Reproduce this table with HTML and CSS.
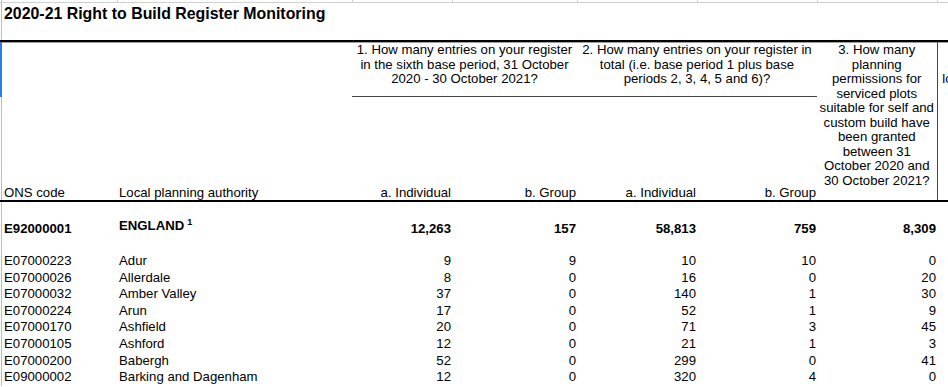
FILE: index.html
```html
<!DOCTYPE html>
<html lang="en">
<head>
<meta charset="utf-8">
<title>2020-21 Right to Build Register Monitoring</title>
<link rel="stylesheet" href="styles.css">
</head>
<body>
<table class="sheet">
  <colgroup>
    <col class="c-code"><col class="c-name"><col class="c-a"><col class="c-b"><col class="c-a2"><col class="c-b2"><col class="c-q3"><col class="c-q4">
  </colgroup>
  <tbody>
    <tr class="grid">
      <td class="first"></td><td></td><td></td><td></td><td></td><td></td><td></td><td></td>
    </tr>
    <tr class="title">
      <td class="first" colspan="8">2020-21 Right to Build Register Monitoring</td>
    </tr>
    <tr class="q">
      <td class="first sel" colspan="2"></td>
      <td class="qsub" colspan="2">1. How many entries on your register in the sixth base period, 31 October 2020 - 30 October 2021?</td>
      <td class="qsub" colspan="2">2. How many entries on your register in total (i.e. base period 1 plus base periods 2, 3, 4, 5 and 6)?</td>
      <td class="q3" rowspan="2">3. How many planning permissions for serviced plots suitable for self and custom build have been granted between 31 October 2020 and 30 October 2021?</td>
      <td class="q4" rowspan="2">4. How many<br>were granted on<br>local authority land<br>in the sixth base<br>period?</td>
    </tr>
    <tr class="lab">
      <td class="first">ONS code</td>
      <td>Local planning authority</td>
      <td class="num">a. Individual</td>
      <td class="num">b. Group</td>
      <td class="num">a. Individual</td>
      <td class="num">b. Group</td>
    </tr>
    <tr class="gap"><td class="first" colspan="8"></td></tr>
    <tr class="eng">
      <td class="first">E92000001</td>
      <td class="name">ENGLAND<sup class="note">1</sup></td>
      <td class="num">12,263</td>
      <td class="num">157</td>
      <td class="num">58,813</td>
      <td class="num">759</td>
      <td class="num">8,309</td>
      <td></td>
    </tr>
    <tr class="gap"><td class="first" colspan="8"></td></tr>
    <tr class="row"><td class="first">E07000223</td><td>Adur</td><td class="num">9</td><td class="num">9</td><td class="num">10</td><td class="num">10</td><td class="num">0</td><td></td></tr>
    <tr class="row"><td class="first">E07000026</td><td>Allerdale</td><td class="num">8</td><td class="num">0</td><td class="num">16</td><td class="num">0</td><td class="num">20</td><td></td></tr>
    <tr class="row"><td class="first">E07000032</td><td>Amber Valley</td><td class="num">37</td><td class="num">0</td><td class="num">140</td><td class="num">1</td><td class="num">30</td><td></td></tr>
    <tr class="row"><td class="first">E07000224</td><td>Arun</td><td class="num">17</td><td class="num">0</td><td class="num">52</td><td class="num">1</td><td class="num">9</td><td></td></tr>
    <tr class="row"><td class="first">E07000170</td><td>Ashfield</td><td class="num">20</td><td class="num">0</td><td class="num">71</td><td class="num">3</td><td class="num">45</td><td></td></tr>
    <tr class="row"><td class="first">E07000105</td><td>Ashford</td><td class="num">12</td><td class="num">0</td><td class="num">21</td><td class="num">1</td><td class="num">3</td><td></td></tr>
    <tr class="row"><td class="first">E07000200</td><td>Babergh</td><td class="num">52</td><td class="num">0</td><td class="num">299</td><td class="num">0</td><td class="num">41</td><td></td></tr>
    <tr class="row"><td class="first">E09000002</td><td>Barking and Dagenham</td><td class="num">12</td><td class="num">0</td><td class="num">320</td><td class="num">4</td><td class="num">0</td><td></td></tr>
  </tbody>
</table>
</body>
</html>
```
FILE: styles.css
```css
html, body {
  margin: 0;
  padding: 0;
  overflow: hidden;
  background: #fff;
}

body {
  font-family: "Liberation Sans", Arial, sans-serif;
  font-size: 13.2px;
  color: #000;
}

.sheet {
  border-collapse: collapse;
  table-layout: fixed;
  width: 1057px;
}

.c-code { width: 117px; }
.c-name { width: 235px; }
.c-a { width: 100px; }
.c-b { width: 125px; }
.c-a2 { width: 120px; }
.c-b2 { width: 120px; }
.c-q3 { width: 120px; }
.c-q4 { width: 120px; }

.sheet td {
  padding: 0 2px;
  white-space: nowrap;
  overflow: hidden;
  line-height: 14.5px;
  vertical-align: middle;
}

.sheet td.num {
  text-align: right;
  padding-right: 1px;
}

.sheet td.first {
  padding-left: 4px;
  box-shadow: inset 1px 0 0 #fff, inset 2px 0 0 #bdbdbd;
}

/* top gridline strip */
.grid td {
  height: 2px;
  padding: 0;
  border-right: 1px solid #d0d0d0;
  border-bottom: 1px solid #d0d0d0;
}

/* title */
.title td {
  height: 35px;
  vertical-align: top;
  padding-top: 2px;
  font-size: 15.9px;
  line-height: 18px;
  font-weight: bold;
  border-bottom: 2px solid #000;
}

/* question header row */
.q td {
  height: 53px;
  vertical-align: top;
  text-align: center;
  white-space: normal;
  padding-top: 1px;
  box-shadow: inset 0 1px 0 #a0a0a0;
}

.q td.sel {
  box-shadow: inset 2px 0 0 #2b7de9, inset 0 1px 0 #a0a0a0;
}

.q td.qsub {
  border-bottom: 1px solid #444;
}

.q td.q3,
.q td.q4 {
  border-bottom: 2px solid #000;
}

.q td.q4 {
  border-left: 1px solid #444;
  white-space: nowrap;
}

/* column label row */
.lab td {
  height: 103px;
  vertical-align: bottom;
  border-bottom: 2px solid #000;
}

.gap td {
  height: 17px;
  padding: 0;
}

.eng td {
  height: 17px;
  font-weight: bold;
  vertical-align: bottom;
}

.eng td.name {
  vertical-align: top;
}

.note {
  font-size: 9px;
  line-height: 0;
  vertical-align: 5px;
  margin-left: 3px;
}

.row td {
  height: 16.6px;
  padding-top: 0;
  padding-bottom: 0;
}
```
